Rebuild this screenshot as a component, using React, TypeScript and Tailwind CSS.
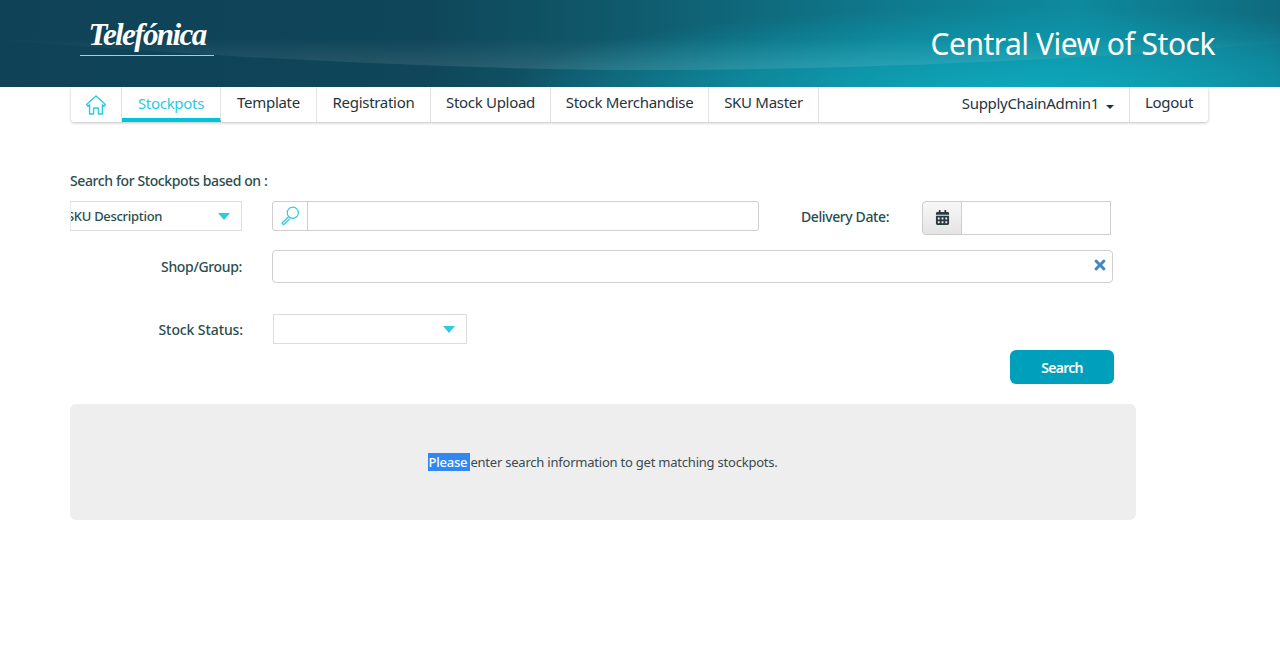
import React from 'react';
import { FaCalendarAlt, FaTimes } from 'react-icons/fa';

const font = "font-['Noto_Sans',sans-serif]";

const Caret = () => (
  <span className="w-0 h-0 border-x-[6px] border-x-transparent border-t-[7px] border-t-[#2ccbe0]" />
);

const HomeIcon = () => (
  <svg width="22" height="22" viewBox="0 0 22 22" fill="none" stroke="#2ccbe0" strokeWidth="1.4" strokeLinejoin="round">
    <path d="M11 2 L1.6 10.6 L3 12.2 L4.6 10.8 V20 H8.6 V14 H13.4 V20 H17.4 V10.8 L19 12.2 L20.4 10.6 Z" />
  </svg>
);

const KeyIcon = () => (
  <svg width="20" height="20" viewBox="0 0 20 20" fill="none" stroke="#2ccbe0" strokeWidth="1.2">
    <circle cx="12.8" cy="6.8" r="5.6" />
    <path d="M8.6 10.8 L2 17 L3.6 18.8 L10 12.6" strokeLinejoin="round" />
  </svg>
);

const navItems = [
  { label: 'Template', width: 'w-[96px]' },
  { label: 'Registration', width: 'w-[114px]' },
  { label: 'Stock Upload', width: 'w-[120px]' },
  { label: 'Stock Merchandise', width: 'w-[158px]' },
  { label: 'SKU Master', width: 'w-[110px]' },
];

const Header = () => (
  <header className="relative h-[87px] overflow-hidden flex justify-between bg-[radial-gradient(ellipse_520px_80px_at_1030px_87px,#0ea7ba_0%,rgba(14,160,180,0.55)_55%,rgba(14,140,160,0)_100%),linear-gradient(90deg,#0f4257_0%,#0f4659_33%,#0f5c6e_50%,#0f7a8e_70%,#0e8a9e_84%,#0f6a7e_100%)]">
    <svg className="absolute inset-0" width="1280" height="87" viewBox="0 0 1280 87" fill="none">
      <defs>
        <linearGradient id="swoosh" x1="0" y1="38" x2="0" y2="70" gradientUnits="userSpaceOnUse">
          <stop offset="0" stopColor="#ffffff" stopOpacity="0" />
          <stop offset="1" stopColor="#ffffff" stopOpacity="0.11" />
        </linearGradient>
      </defs>
      <path d="M0 40 C 200 56, 420 68, 620 70 C 860 71, 1100 58, 1280 43 L1280 38 L0 38 Z" fill="url(#swoosh)" />
    </svg>
    <div className="relative ml-[80px] mt-[16px] w-[134px] flex flex-col items-center">
      <span className="font-['Liberation_Serif',serif] italic font-bold text-[31px] leading-[38px] tracking-[-1.6px] text-white">Telefónica</span>
      <span className="w-[134px] h-px bg-white/70 mt-px" />
    </div>
    <h1 className={`relative mr-[65px] mt-[23px] text-[30px] leading-[42px] text-white tracking-[-0.5px] ${font}`}>Central View of Stock</h1>
  </header>
);

const Nav = () => (
  <nav className="ml-[71px] w-[1137px] h-[35px] flex justify-between rounded-b-[3px] bg-white text-[15px] tracking-[-0.3px] text-[#1f3440] shadow-[0_1px_3px_rgba(0,0,0,0.25)]">
    <div className="flex">
      <a className="w-[51px] flex items-center justify-center border-r border-[#e2e2e2]"><HomeIcon /></a>
      <a className="w-[99px] flex items-center justify-center border-r border-[#e2e2e2] border-b-[4px] border-b-[#00c4dc] text-[#2ccbe0] pt-[2px]">Stockpots</a>
      {navItems.map((item) => (
        <a key={item.label} className={`${item.width} flex items-center justify-center border-r border-[#e2e2e2] pb-[4px]`}>{item.label}</a>
      ))}
    </div>
    <div className="flex">
      <a className="flex items-center pr-[15px] pb-[3px]">
        SupplyChainAdmin1
        <span className="ml-[7px] mt-[7px] w-0 h-0 border-x-[4px] border-x-transparent border-t-[4px] border-t-[#1f3440]" />
      </a>
      <a className="w-[79px] flex items-center justify-center border-l border-[#e2e2e2] pb-[4px]">Logout</a>
    </div>
  </nav>
);

const labelClass = 'text-[14px] font-medium text-[#2a4d50] leading-[20px]';

const App = () => (
  <div className={`min-h-[655px] bg-white ${font}`}>
    <Header />
    <Nav />
    <main className="ml-[70px] w-[1066px]">
      <p className={`mt-[49px] tracking-[-0.4px] ${labelClass}`}>Search for Stockpots based on :</p>

      <div className="mt-[10px] flex items-start">
        <div className="w-[172px] h-[30px] border border-[#dcdcdc] border-l-[#e8e8e8] flex items-center justify-between pr-[11px] overflow-hidden">
          <span className="text-[13px] font-medium tracking-[-0.3px] text-[#2a4d50] ml-[-4px] mt-[1px] whitespace-nowrap">SKU Description</span>
          <Caret />
        </div>
        <div className="ml-[30px] w-[487px] h-[30px] flex border border-[#cfcfcf] rounded-[3px]">
          <span className="w-[35px] flex items-center justify-center border-r border-[#cfcfcf]"><KeyIcon /></span>
          <input className="flex-1 outline-none" />
        </div>
        <label className={`ml-[42px] mt-[6px] w-[89px] whitespace-nowrap tracking-[-0.4px] ${labelClass}`}>Delivery Date:</label>
        <div className="ml-[32px] flex h-[34px]">
          <span className="w-[40px] pb-px flex items-center justify-center border border-[#cccccc] rounded-l-[4px] bg-gradient-to-b from-[#f8f8f8] to-[#e4e4e4] text-[#2b3a40]">
            <FaCalendarAlt size={15} />
          </span>
          <input className="w-[149px] border border-l-0 border-[#cfcfcf] outline-none" />
        </div>
      </div>

      <div className="mt-[15px] flex items-center">
        <label className={`w-[172px] text-right tracking-[-0.35px] ${labelClass}`}>Shop/Group:</label>
        <div className="ml-[30px] w-[841px] h-[33px] flex items-center justify-end pr-[4px] pb-[4px] border border-[#cfcfcf] rounded-[4px] text-[#4286c4]">
          <FaTimes size={16} />
        </div>
      </div>

      <div className="mt-[31px] flex items-center">
        <label className={`w-[173px] text-right pt-[2px] tracking-[-0.1px] ${labelClass}`}>Stock Status:</label>
        <div className="ml-[30px] w-[194px] h-[30px] border border-[#dcdcdc] flex items-center justify-end pr-[11px]">
          <Caret />
        </div>
      </div>

      <div className="mt-[6px] w-[1044px] flex justify-end">
        <button className="w-[104px] h-[34px] rounded-[6px] bg-[#00a0bd] text-white text-[14px] font-semibold tracking-[-0.7px]">Search</button>
      </div>

      <div className="mt-[20px] h-[116px] rounded-[6px] bg-[#eeeeee] flex items-center justify-center text-[13px] tracking-[-0.22px] text-[#3a4a50]">
        <p className="pt-[1px]">
          <span className="bg-[#3088f4] text-white font-medium">Please </span>
          enter search information to get matching stockpots.
        </p>
      </div>
    </main>
  </div>
);

export default App;
